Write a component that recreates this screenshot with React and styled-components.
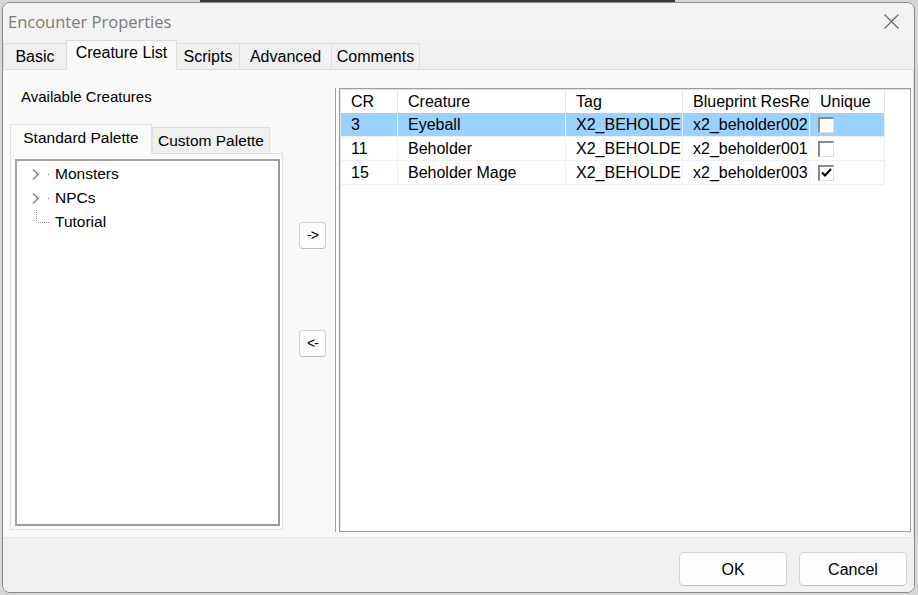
import React from "react";
import styled, { createGlobalStyle } from "styled-components";

const UI = '"Liberation Sans", Arial, sans-serif';

const GlobalStyle = createGlobalStyle`
  html, body { margin: 0; padding: 0; }
  body {
    width: 918px;
    height: 595px;
    overflow: hidden;
    font-family: ${UI};
    color: #000;
  }
`;

const Desktop = styled.div`
  width: 918px;
  height: 595px;
  box-sizing: border-box;
  padding: 2px 3px 2px 2px;
  background: linear-gradient(#3b372c, #3b372c) 200px 0 / 475px 2px no-repeat, #d6d6d6;
`;

const Window = styled.div`
  height: 100%;
  box-sizing: border-box;
  border: 1px solid #8a8a8a;
  border-radius: 8px;
  overflow: hidden;
  display: flex;
  flex-direction: column;
  background: #f0f0f0;
`;

const TitleBar = styled.div`
  height: 37px;
  flex: none;
  display: flex;
  align-items: center;
  padding: 0 15px 0 5px;
  background: #f3f3f3;
`;

const Title = styled.span`
  font-family: "Segoe UI", "Open Sans", sans-serif;
  font-size: 16.5px;
  color: #7b7b7b;
`;

const CloseButton = styled.div`
  margin-left: auto;
  width: 15px;
  height: 15px;
  display: flex;
`;

const TabStrip = styled.div`
  height: 30px;
  flex: none;
  box-sizing: border-box;
  display: flex;
  align-items: flex-end;
  padding-left: 1px;
  background: #f0f0f0;
  border-bottom: 1px solid #dcdcdc;
`;

const Tab = styled.div`
  width: ${(p) => p.$w}px;
  height: ${(p) => (p.$active ? 30 : 26)}px;
  margin-bottom: ${(p) => (p.$active ? -1 : 0)}px;
  margin-left: -1px;
  box-sizing: border-box;
  border: 1px solid #dcdcdc;
  border-bottom: none;
  background: ${(p) => (p.$active ? "#f9f9f9" : "#f0f0f0")};
  position: relative;
  z-index: ${(p) => (p.$active ? 1 : 0)};
  display: flex;
  align-items: ${(p) => (p.$active ? "flex-start" : "center")};
  justify-content: center;
  padding-top: ${(p) => (p.$active ? 3 : 1)}px;
  font-size: 16px;
  white-space: nowrap;
`;

const Panel = styled.div`
  flex: 1;
  display: flex;
  box-sizing: border-box;
  padding: 0 2px 5px 7px;
  background: #f9f9f9;
  border-right: 1px solid #dcdcdc;
  border-bottom: 1px solid #e6e6e6;
`;

const LeftCol = styled.div`
  width: 273px;
  flex: none;
  display: flex;
  flex-direction: column;
  padding: 19px 0 2px;
`;

const GroupLabel = styled.div`
  font-size: 15px;
  line-height: 16px;
  padding-left: 11px;
`;

const SubTabs = styled.div`
  height: 30px;
  margin-top: 18px;
  display: flex;
  align-items: flex-end;
`;

const SubTab = styled.div`
  width: ${(p) => p.$w}px;
  height: ${(p) => (p.$active ? 30 : 26)}px;
  margin-bottom: ${(p) => (p.$active ? -1 : 0)}px;
  box-sizing: border-box;
  border: 1px solid #e0e0e0;
  border-bottom: none;
  background: ${(p) => (p.$active ? "#fbfbfb" : "#f0f0f0")};
  position: relative;
  z-index: ${(p) => (p.$active ? 1 : 0)};
  display: flex;
  align-items: ${(p) => (p.$active ? "flex-start" : "center")};
  justify-content: center;
  padding-top: ${(p) => (p.$active ? 4 : 1)}px;
  font-size: 15.5px;
  white-space: nowrap;
`;

const TabBody = styled.div`
  flex: 1;
  display: flex;
  border: 1px solid #e0e0e0;
  background: #fbfbfb;
`;

const TreeBox = styled.div`
  flex: 1;
  margin: 5px 2px 3px 4px;
  background: #fff;
  border: 2px solid #a4a4a4;
  border-right-color: #999;
  border-bottom-color: #999;
  padding-top: 1px;
`;

const TreeRow = styled.div`
  height: 24px;
  display: flex;
  align-items: center;
  padding-left: 12px;
  font-size: 15.5px;
`;

const TreeGlyph = styled.svg`
  width: 26px;
  height: 24px;
  flex: none;
`;

const MidCol = styled.div`
  width: 52px;
  flex: none;
  display: flex;
  flex-direction: column;
  padding: 152px 0 0 16px;
  box-sizing: border-box;
  gap: 81px;
`;

const ArrowButton = styled.div`
  width: 27px;
  height: 27px;
  box-sizing: border-box;
  border: 1px solid #d0d0d0;
  border-bottom-color: #bdbdbd;
  border-radius: 4px;
  background: #fdfdfd;
  display: flex;
  align-items: center;
  justify-content: center;
  font-size: 14px;
  letter-spacing: -1px;
  padding-bottom: 1px;
`;

const Separator = styled.div`
  width: 1px;
  flex: none;
  margin: 18px 3px 0 0;
  background: #a0a0a0;
  box-shadow: 1px 0 0 #fff;
`;

const ListBox = styled.div`
  flex: 1;
  margin-top: 18px;
  background: #fff;
  border: 1px solid #9c9c9c;
  box-shadow: inset 1px 1px 0 #e2e2e2;
  padding: 1px 0 0 1px;
`;

const Grid = styled.div`
  display: grid;
  grid-template-columns: 57px 168px 117px 127px 75px;
  width: 544px;
`;

const Cell = styled.div`
  height: ${(p) => (p.$head ? 23 : 24)}px;
  box-sizing: border-box;
  border-right: 1px solid ${(p) => (p.$head ? "#e5e5e5" : "#f0f0f0")};
  border-bottom: 1px solid ${(p) => (p.$head ? "transparent" : "#f0f0f0")};
  background: ${(p) => (p.$sel ? "#99d1ff" : "#fff")};
  display: flex;
  align-items: center;
  padding: ${(p) => (p.$box ? "0 0 0 8px" : "1px 0 0 10px")};
  font-size: 16px;
  white-space: nowrap;
  overflow: hidden;
`;

const CheckBox = styled.div`
  width: 16px;
  height: 16px;
  box-sizing: border-box;
  background: #fff;
  border-top: 2px solid #8a8a8a;
  border-left: 2px solid #8a8a8a;
  border-right: 1px solid #dcdcdc;
  border-bottom: 1px solid #dcdcdc;
  display: flex;
  align-items: center;
  justify-content: center;
`;

const Footer = styled.div`
  height: 54px;
  flex: none;
  box-sizing: border-box;
  display: flex;
  justify-content: flex-end;
  gap: 12px;
  padding: 14px 7px 0 0;
  background: #f0f0f0;
`;

const DialogButton = styled.div`
  width: 108px;
  height: 34px;
  box-sizing: border-box;
  border: 1px solid #d3d3d3;
  border-bottom-color: #c0c0c0;
  border-radius: 5px;
  background: #fdfdfd;
  display: flex;
  align-items: center;
  justify-content: center;
  font-size: 16px;
  padding-top: 1px;
`;

const tabs = [
  { label: "Basic", w: 64 },
  { label: "Creature List", w: 111, active: true },
  { label: "Scripts", w: 64 },
  { label: "Advanced", w: 93 },
  { label: "Comments", w: 89 },
];

const rows = [
  { cr: "3", name: "Eyeball", tag: "X2_BEHOLDER002", res: "x2_beholder002", unique: false, sel: true },
  { cr: "11", name: "Beholder", tag: "X2_BEHOLDER001", res: "x2_beholder001", unique: false },
  { cr: "15", name: "Beholder Mage", tag: "X2_BEHOLDER003", res: "x2_beholder003", unique: true },
];

const Chevron = () => (
  <TreeGlyph viewBox="0 0 26 24">
    <path d="M4 7.5 L9 12.5 L4 17.5" fill="none" stroke="#8a8a8a" strokeWidth="1.7" />
    <rect x="19" y="12" width="1" height="1" fill="#777" />
  </TreeGlyph>
);

const Leaf = () => (
  <TreeGlyph viewBox="0 0 26 24">
    <path d="M7.5 0 V12.5 H21" fill="none" stroke="#9a9a9a" strokeWidth="1" strokeDasharray="1 1" />
  </TreeGlyph>
);

export default function App() {
  return (
    <>
      <GlobalStyle />
      <Desktop>
        <Window>
          <TitleBar>
            <Title>Encounter Properties</Title>
            <CloseButton>
              <svg width="15" height="15" viewBox="0 0 15 15">
                <path d="M0.5 0.5 L14.5 14.5 M14.5 0.5 L0.5 14.5" stroke="#666" strokeWidth="1.1" />
              </svg>
            </CloseButton>
          </TitleBar>

          <TabStrip>
            {tabs.map((t) => (
              <Tab key={t.label} $w={t.w} $active={t.active}>
                {t.label}
              </Tab>
            ))}
          </TabStrip>

          <Panel>
            <LeftCol>
              <GroupLabel>Available Creatures</GroupLabel>
              <SubTabs>
                <SubTab $w={142} $active>Standard Palette</SubTab>
                <SubTab $w={118}>Custom Palette</SubTab>
              </SubTabs>
              <TabBody>
                <TreeBox>
                  <TreeRow>
                    <Chevron />
                    Monsters
                  </TreeRow>
                  <TreeRow>
                    <Chevron />
                    NPCs
                  </TreeRow>
                  <TreeRow>
                    <Leaf />
                    Tutorial
                  </TreeRow>
                </TreeBox>
              </TabBody>
            </LeftCol>

            <MidCol>
              <ArrowButton>-&gt;</ArrowButton>
              <ArrowButton>&lt;-</ArrowButton>
            </MidCol>

            <Separator />

            <ListBox>
              <Grid>
                <Cell $head>CR</Cell>
                <Cell $head>Creature</Cell>
                <Cell $head>Tag</Cell>
                <Cell $head>Blueprint ResRef</Cell>
                <Cell $head>Unique</Cell>
                {rows.map((r) => (
                  <React.Fragment key={r.cr}>
                    <Cell $sel={r.sel}>{r.cr}</Cell>
                    <Cell $sel={r.sel}>{r.name}</Cell>
                    <Cell $sel={r.sel}>{r.tag}</Cell>
                    <Cell $sel={r.sel}>{r.res}</Cell>
                    <Cell $sel={r.sel} $box>
                      <CheckBox>
                        {r.unique && (
                          <svg width="11" height="10" viewBox="0 0 11 10">
                            <path d="M1 4.5 L4 7.5 L10 1" fill="none" stroke="#000" strokeWidth="2" />
                          </svg>
                        )}
                      </CheckBox>
                    </Cell>
                  </React.Fragment>
                ))}
              </Grid>
            </ListBox>
          </Panel>

          <Footer>
            <DialogButton>OK</DialogButton>
            <DialogButton>Cancel</DialogButton>
          </Footer>
        </Window>
      </Desktop>
    </>
  );
}
